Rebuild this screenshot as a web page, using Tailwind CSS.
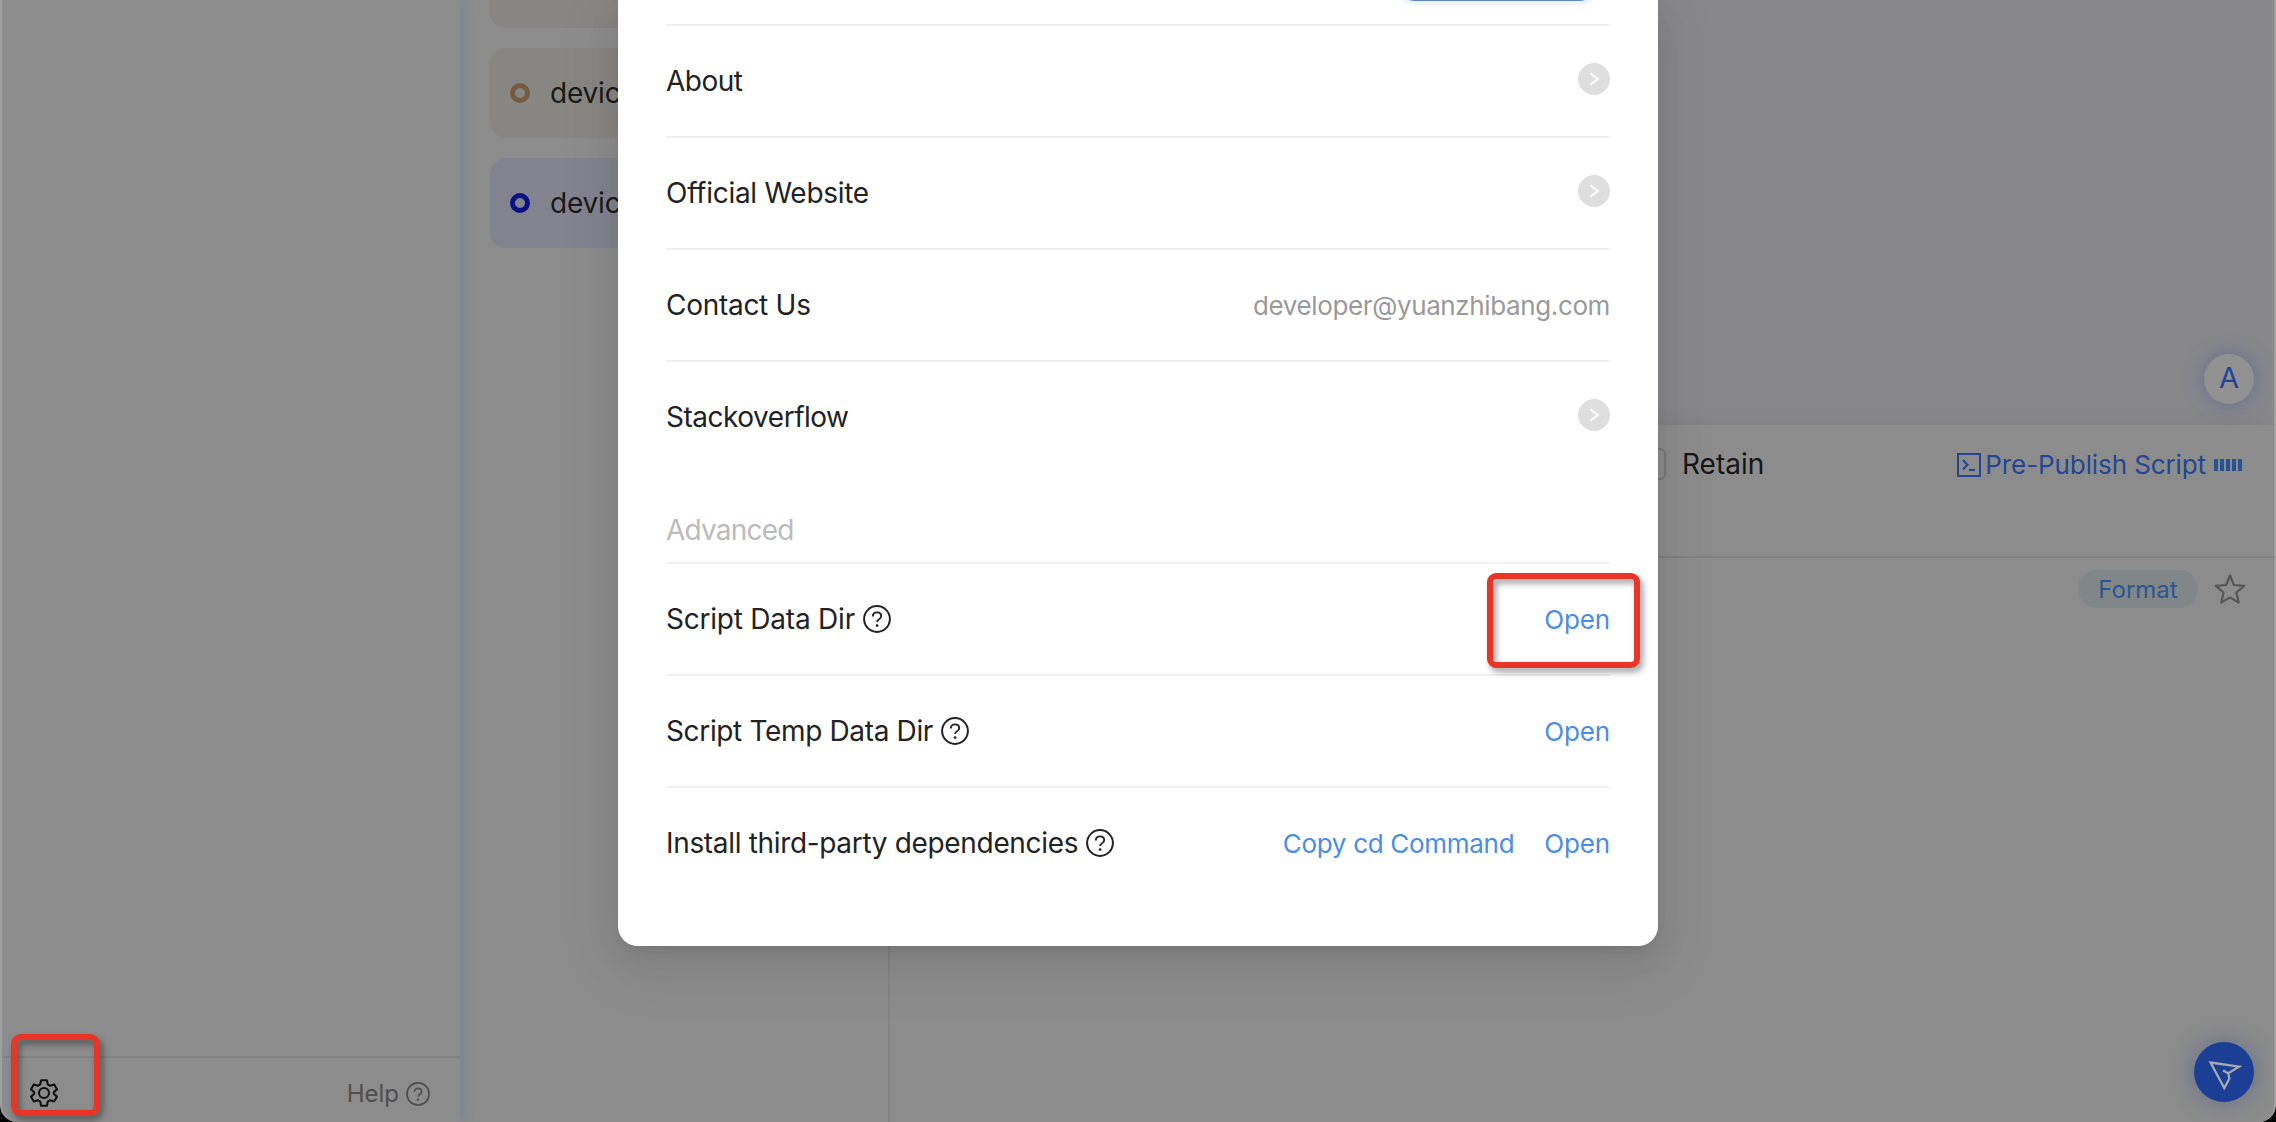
<!DOCTYPE html>
<html lang="en">
<head>
<meta charset="utf-8">
<title>Settings</title>
<script src="https://cdn.jsdelivr.net/npm/@tailwindcss/browser@4"></script>
</head>
<body class="bg-black font-[Inter,sans-serif]">
<svg class="hidden">
  <symbol id="help" viewBox="0 0 28 28">
    <circle cx="14" cy="14" r="12.9" fill="none" stroke="currentColor" stroke-width="2"/>
    <path d="M9.8 11.4c0-2.4 1.8-4 4.2-4s4.200 1.500 4.200 3.700c0 1.700-1 2.700-2.400 3.400-1.200.6-1.700 1.200-1.700 2.600" fill="none" stroke="currentColor" stroke-width="1.900"/>
    <circle cx="14.100" cy="20.600" r="1.400" fill="currentColor"/>
  </symbol>
  <symbol id="go" viewBox="0 0 32 32">
    <circle cx="16" cy="16" r="16" fill="#dedede"/>
    <path d="M12.400 10.300 20 16l-7.600 5.700" fill="none" stroke="#fff" stroke-width="2.200"/>
  </symbol>
</svg>

<div class="relative h-[1122px] w-[2276px] overflow-hidden">
  <!-- application window -->
  <div class="flex h-full w-full overflow-hidden rounded-b-[17px] border-x-2 border-[#a0a0a0] bg-[#8c8c8c]">
    <aside class="relative z-10 flex w-[458px] shrink-0 flex-col justify-end bg-[#8c8c8c] shadow-[2px_0_12px_rgba(70,95,150,0.24)]">
      <footer class="flex h-[66px] items-start justify-between border-t-2 border-[#838383] pt-[20px] pr-[30px] pl-[27px]">
        <svg class="h-[30px] w-[30px] text-[#111]" viewBox="0 0 30 30" fill="none" stroke="currentColor" stroke-width="2.100" stroke-linejoin="round">
          <path d="M12.100 2.200h5.800l.8 4.100 2.500 1.450 3.950-1.350 2.850 4.950-3.150 2.750v1.800l3.150 2.750-2.850 4.950-3.950-1.350-2.500 1.450-.8 4.100h-5.800l-.8-4.100-2.500-1.450-3.950 1.350L2 18.650l3.150-2.750v-1.800L2 11.350 4.850 6.400 8.800 7.750l2.500-1.450z"/>
          <circle cx="15" cy="15" r="5"/>
        </svg>
        <div class="flex items-center text-2xl leading-[32px] text-[#4f4f4f]">
          <span>Help</span>
          <svg class="ml-[7px] h-6 w-6"><use href="#help"/></svg>
        </div>
      </footer>
    </aside>

    <section class="flex w-[430px] shrink-0 flex-col gap-5 border-r-2 border-[#828282] pr-4 pl-[30px] text-[28px] tracking-[-0.2px] text-[#1a1a1a]">
      <div class="h-[28px] rounded-b-2xl bg-[#888683]"></div>
      <div class="flex h-[90px] items-center gap-5 rounded-2xl bg-[#888683] pl-5">
        <i class="h-5 w-5 rounded-full border-[5px] border-[#765a40]"></i>
        <span>devic</span>
      </div>
      <div class="flex h-[90px] items-center gap-5 rounded-2xl bg-[#83838f] pl-5">
        <i class="h-5 w-5 rounded-full border-[5px] border-[#081085]"></i>
        <span>devic</span>
      </div>
    </section>

    <main class="flex min-w-0 flex-1 flex-col">
      <div class="flex h-[425px] shrink-0 items-end justify-end bg-[#88888b] pr-5 pb-[21px]">
        <div class="flex h-[50px] w-[50px] items-center justify-center rounded-full bg-[#919191] text-[29px] text-[#1f459c] shadow-[0_0_22px_rgba(60,70,150,0.45)]"><span class="mb-0.5">A</span></div>
      </div>
      <div class="relative flex h-[133px] shrink-0 items-start border-b-2 border-[#7f7f7f] bg-[#8c8c8c] pt-[23px] pr-[32px] pl-[744px] shadow-[0_0_20px_rgba(0,0,0,0.07)]">
        <div class="flex h-8 items-center">
          <i class="h-8 w-8 rounded-md border-2 border-[#777]"></i>
          <span class="ml-4 text-[28px] text-[#161616]">Retain</span>
        </div>
        <div class="ml-auto flex h-[33px] items-center text-[26px] tracking-[-0.1px] text-[#244694]">
          <svg class="h-6 w-6" viewBox="0 0 24 24" fill="none" stroke="currentColor" stroke-width="2"><path d="M1 1h22v22H1zM6 7l4.500 4.800L6 16.500M12 17h6"/></svg>
          <span class="ml-1">Pre-Publish Script</span>
          <span class="ml-[8px] flex gap-0.5">
            <i class="h-3 w-1 bg-[#265395]"></i><i class="h-3 w-1 bg-[#265395]"></i><i class="h-3 w-1 bg-[#265395]"></i><i class="h-3 w-1 bg-[#265395]"></i><i class="h-3 w-1 bg-[#265395]"></i>
          </span>
        </div>
      </div>
      <div class="relative flex flex-1 flex-col items-end justify-between bg-[#8c8c8c] pt-[12px] pr-[20px] pb-5">
        <div class="flex items-center pr-2">
          <span class="flex h-[38px] w-[120px] items-center justify-center rounded-full bg-[#818689] pt-0.5 text-2xl text-[#2b568f]">Format</span>
          <svg class="ml-4 h-8 w-8" viewBox="0 0 32 32" fill="none" stroke="#565656" stroke-width="2.200" stroke-linejoin="round"><path d="M16 2.500 19.900 12l10.300.8-7.800 6.700 2.300 10.100L16 24.400l-8.700 5.200 2.300-10.100-7.800-6.700L12.100 12z"/></svg>
        </div>
        <div class="flex h-[60px] w-[60px] items-center justify-center rounded-full bg-[#1a3f94] shadow-[0_0_24px_rgba(40,65,140,0.4)]">
          <svg class="h-[60px] w-[60px]" viewBox="0 0 60 60" fill="none" stroke="#a3a8b3" stroke-width="2.300"><path d="M16.500 20.500 45 24.700 34.200 31.200 35.400 36.500 30.300 46zM34.200 31.200 29 28.500"/></svg>
        </div>
      </div>
    </main>
  </div>

  <!-- settings dialog -->
  <div class="absolute top-0 left-[618px] z-10 h-[946px] w-[1040px] rounded-b-[20px] bg-white px-12 text-[28px] text-[#222] shadow-[0_12px_32px_rgba(0,0,0,0.08),0_6px_12px_-8px_rgba(0,0,0,0.12),0_18px_56px_16px_rgba(0,0,0,0.05)]">
    <div class="flex h-[26px] items-start justify-end border-b-2 border-[#f0f0f0] pr-[7px]">
      <div class="h-[5px] w-[212px] overflow-hidden px-1">
        <div class="mt-[-59px] h-[60px] w-full rounded-[20px] bg-[#5b87c8] shadow-[0_0_0_4px_#eef4fc]"></div>
      </div>
    </div>
    <div class="flex h-28 items-center justify-between border-b-2 border-[#f0f0f0]">
      <span class="tracking-[-0.5px]">About</span>
      <svg class="mb-1 h-8 w-8"><use href="#go"/></svg>
    </div>
    <div class="flex h-28 items-center justify-between border-b-2 border-[#f0f0f0]">
      <span class="tracking-[-0.28px]">Official Website</span>
      <svg class="mb-1 h-8 w-8"><use href="#go"/></svg>
    </div>
    <div class="flex h-28 items-center justify-between border-b-2 border-[#f0f0f0]">
      <span class="tracking-[-0.28px]">Contact Us</span>
      <span class="text-[26px] tracking-[-0.38px] text-[#999]">developer@yuanzhibang.com</span>
    </div>
    <div class="flex h-[110px] items-center justify-between">
      <span class="tracking-[-0.48px]">Stackoverflow</span>
      <svg class="mb-1 h-8 w-8"><use href="#go"/></svg>
    </div>
    <div class="flex h-[92px] items-end border-b-2 border-[#f0f0f0] pb-[11px] leading-[42px] tracking-[-0.8px] text-[#bbb]">Advanced</div>
    <div class="flex h-28 items-center border-b-2 border-[#f0f0f0]">
      <span class="tracking-[-0.22px]">Script Data Dir</span>
      <svg class="ml-2 h-7 w-7"><use href="#help"/></svg>
      <a class="ml-auto pt-px text-[26px] tracking-[-0.15px] text-[#4a8de8]">Open</a>
    </div>
    <div class="flex h-28 items-center border-b-2 border-[#f0f0f0]">
      <span class="tracking-[-0.35px]">Script Temp Data Dir</span>
      <svg class="ml-2 h-7 w-7"><use href="#help"/></svg>
      <a class="ml-auto pt-px text-[26px] tracking-[-0.15px] text-[#4a8de8]">Open</a>
    </div>
    <div class="flex h-[110px] items-center">
      <span class="tracking-[-0.33px]">Install third-party dependencies</span>
      <svg class="ml-2 h-7 w-7"><use href="#help"/></svg>
      <a class="ml-auto pt-px text-[26px] tracking-[-0.3px] text-[#4a8de8]">Copy cd Command</a>
      <a class="ml-[30px] pt-px text-[26px] tracking-[-0.15px] text-[#4a8de8]">Open</a>
    </div>
  </div>

  <!-- highlight frames -->
  <div class="absolute top-[573px] left-[1487px] z-20 h-[95px] w-[153px] rounded-[9px] border-[6px] border-[#e83527] drop-shadow-[3px_4px_3px_rgba(0,0,0,0.4)]"></div>
  <div class="absolute top-[1034px] left-[11px] z-20 h-[82px] w-[89px] rounded-[10px] border-[6px] border-[#e83527] drop-shadow-[3px_4px_3px_rgba(0,0,0,0.4)]"></div>
</div>
</body>
</html>
